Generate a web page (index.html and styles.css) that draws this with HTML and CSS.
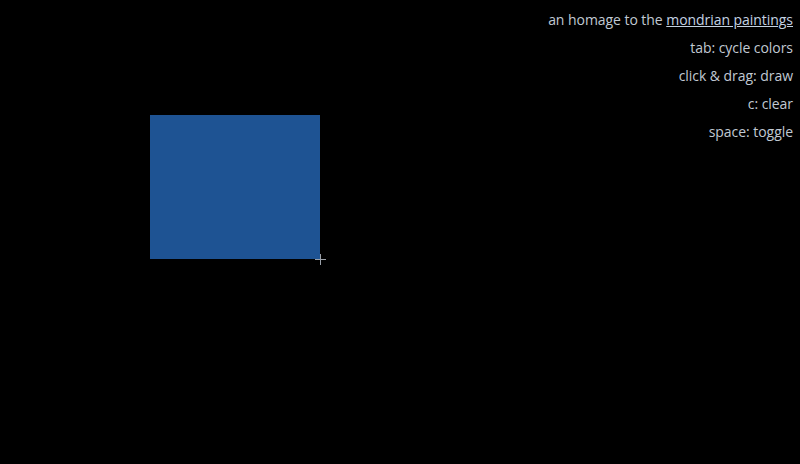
FILE: index.html
```html
<!DOCTYPE html>
<html>
<head>
<meta charset="utf-8">
<link rel="stylesheet" href="styles.css">
</head>
<body>
<div class="canvas">
  <div class="rect"></div>
  <div class="cursor"></div>
</div>
<div class="help">
  <p>an homage to the <a href="#">mondrian paintings</a></p>
  <p>tab: cycle colors</p>
  <p>click &amp; drag: draw</p>
  <p>c: clear</p>
  <p>space: toggle</p>
</div>
</body>
</html>
```

FILE: styles.css
```css
html, body {
  margin: 0;
  padding: 0;
  background: #000;
  width: 800px;
  height: 464px;
  overflow: hidden;
}
.canvas {
  position: absolute;
  inset: 0;
}
.rect {
  position: absolute;
  left: 150px;
  top: 115px;
  width: 170px;
  height: 144px;
  background: #1e5393;
}
.cursor {
  position: absolute;
  left: 315px;
  top: 254px;
  width: 11px;
  height: 11px;
}
.cursor::before, .cursor::after {
  content: "";
  position: absolute;
  background: #9aa0a8;
}
.cursor::before { left: 5px; top: 0; width: 1px; height: 11px; }
.cursor::after { left: 0; top: 5px; width: 11px; height: 1px; }
.help {
  position: relative;
  display: flex;
  flex-direction: column;
  align-items: flex-end;
  gap: 8px;
  padding: 10px 7px 0 0;
  font-family: "Open Sans", "Noto Sans", sans-serif;
  font-size: 14px;
  letter-spacing: -0.05px;
  line-height: 20px;
  color: #c0c9d3;
}
.help p { margin: 0; }
.help a {
  color: #c4d2e2;
  text-decoration: underline;
}
```
